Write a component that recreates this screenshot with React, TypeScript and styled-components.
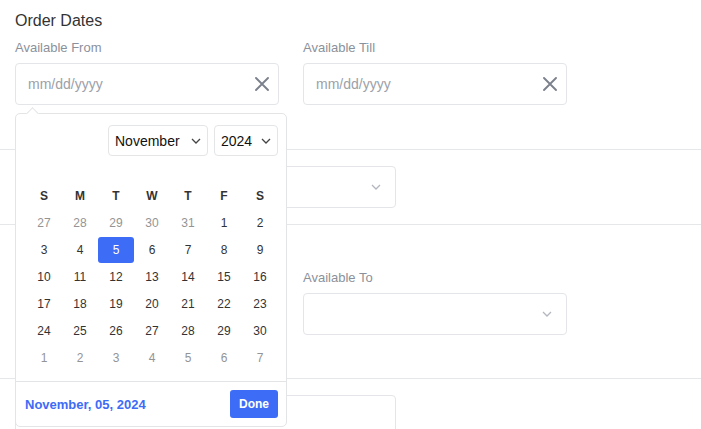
import React from "react";
import styled, { createGlobalStyle } from "styled-components";

const GlobalStyle = createGlobalStyle`
  html, body {
    margin: 0;
    padding: 0;
    background: #ffffff;
  }
  body {
    font-family: "Liberation Sans", Arial, sans-serif;
    color: #333333;
  }
`;

const Page = styled.div`
  width: 100%;
  overflow: hidden;
`;

const Section = styled.section<{ $top: number; $bottom: number; $last?: boolean }>`
  padding: ${(p) => p.$top}px 15px ${(p) => p.$bottom}px;
  border-bottom: ${(p) => (p.$last ? "none" : "1px solid #e6e7e9")};
`;

const Title = styled.h2`
  margin: 0 0 10px;
  font-size: 16px;
  line-height: 19px;
  font-weight: normal;
  color: #333333;
`;

const FieldGrid = styled.div<{ $raised?: boolean }>`
  position: relative;
  z-index: ${(p) => (p.$raised ? 5 : 1)};
  display: grid;
  grid-template-columns: 264px 264px;
  column-gap: 24px;
`;

const Field = styled.div`
  position: relative;
  display: flex;
  flex-direction: column;
`;

const Label = styled.label`
  min-height: 15px;
  margin-bottom: 8px;
  font-size: 13px;
  line-height: 15px;
  color: #8b919b;
`;

const InputBox = styled.div<{ $width?: number }>`
  box-sizing: border-box;
  width: ${(p) => (p.$width ? `${p.$width}px` : "100%")};
  height: 42px;
  display: flex;
  align-items: center;
  justify-content: space-between;
  padding: 0 9px 0 12px;
  border: 1px solid #e3e5e8;
  border-radius: 4px;
  background: #ffffff;
`;

const Placeholder = styled.span`
  font-size: 14px;
  color: #9ba1a9;
`;

const SelectChevron = styled.span`
  display: flex;
  margin-right: 5px;
  color: #b3b7bd;
`;

// calendar popup
const Popup = styled.div`
  position: absolute;
  top: calc(100% + 8px);
  left: 0;
  z-index: 10;
  box-sizing: border-box;
  width: 272px;
  border: 1px solid #e3e4e6;
  border-radius: 5px;
  background: #ffffff;

  &::before {
    content: "";
    position: absolute;
    top: -5px;
    left: 12px;
    width: 8px;
    height: 8px;
    background: #ffffff;
    border-top: 1px solid #e3e4e6;
    border-left: 1px solid #e3e4e6;
    transform: rotate(45deg);
  }
`;

const PopupHead = styled.div`
  display: flex;
  justify-content: flex-end;
  gap: 6px;
  padding: 11px 8px 0;
`;

const MiniSelect = styled.div<{ $width: number }>`
  box-sizing: border-box;
  width: ${(p) => p.$width}px;
  height: 31px;
  display: flex;
  align-items: center;
  justify-content: space-between;
  padding: 0 6px 0 6px;
  border: 1px solid #e4e5e7;
  border-radius: 4px;
  font-size: 14px;
  color: #111111;
`;

const DayGrid = styled.div`
  display: grid;
  grid-template-columns: repeat(7, 36px);
  grid-auto-rows: 26px;
  row-gap: 1px;
  margin-top: 27px;
  padding: 0 8px 10px 10px;
`;

const WeekDay = styled.div`
  display: flex;
  align-items: center;
  justify-content: center;
  font-size: 12px;
  font-weight: bold;
  color: #333333;
`;

const Day = styled.div<{ $muted?: boolean; $selected?: boolean }>`
  display: flex;
  align-items: center;
  justify-content: center;
  font-size: 12px;
  border-radius: 3px;
  color: ${(p) => (p.$selected ? "#ffffff" : p.$muted ? "#949494" : "#333333")};
  background: ${(p) => (p.$selected ? "#3d6cf7" : "transparent")};
`;

const PopupFooter = styled.div`
  display: flex;
  align-items: center;
  justify-content: space-between;
  padding: 8px 8px 8px 9px;
  border-top: 1px solid #e3e4e6;
`;

const FooterDate = styled.span`
  font-size: 13px;
  font-weight: bold;
  color: #3d6cf7;
`;

const DoneButton = styled.button`
  width: 48px;
  height: 28px;
  border: none;
  border-radius: 3px;
  background: #3d6cf7;
  color: #ffffff;
  font-family: inherit;
  font-size: 12px;
  font-weight: bold;
  cursor: pointer;
`;

const ClearIcon = () => (
  <svg width="14" height="14" viewBox="0 0 14 14">
    <path d="M1 1L13 13M13 1L1 13" stroke="#7b818c" strokeWidth="1.9" strokeLinecap="round" />
  </svg>
);

const Chevron = ({ color, width = 10 }: { color: string; width?: number }) => (
  <svg width={width} height="6" viewBox="0 0 10 6">
    <path d="M1 1L5 5L9 1" stroke={color} strokeWidth="1.3" fill="none" />
  </svg>
);

const WEEKDAYS = ["S", "M", "T", "W", "T", "F", "S"];

type Cell = { day: number; muted: boolean };

const cells: Cell[] = [
  ...[27, 28, 29, 30, 31].map((d) => ({ day: d, muted: true })),
  ...Array.from({ length: 30 }, (_, i) => ({ day: i + 1, muted: false })),
  ...Array.from({ length: 7 }, (_, i) => ({ day: i + 1, muted: true })),
];

function DateField({ label, open }: { label: string; open?: boolean }) {
  return (
    <Field>
      <Label>{label}</Label>
      <InputBox>
        <Placeholder>mm/dd/yyyy</Placeholder>
        <ClearIcon />
      </InputBox>
      {open && (
        <Popup>
          <PopupHead>
            <MiniSelect $width={100}>
              November
              <Chevron color="#444" />
            </MiniSelect>
            <MiniSelect $width={64}>
              2024
              <Chevron color="#444" />
            </MiniSelect>
          </PopupHead>
          <DayGrid>
            {WEEKDAYS.map((w, i) => (
              <WeekDay key={i}>{w}</WeekDay>
            ))}
            {cells.map((c, i) => (
              <Day key={i} $muted={c.muted} $selected={!c.muted && c.day === 5}>
                {c.day}
              </Day>
            ))}
          </DayGrid>
          <PopupFooter>
            <FooterDate>November, 05, 2024</FooterDate>
            <DoneButton>Done</DoneButton>
          </PopupFooter>
        </Popup>
      )}
    </Field>
  );
}

function SelectField({ label, width, withLabel }: { label?: string; width?: number; withLabel?: boolean }) {
  return (
    <Field>
      {withLabel && <Label>{label}</Label>}
      <InputBox $width={width}>
        <span />
        <SelectChevron>
          <Chevron color="#b3b7bd" width={10} />
        </SelectChevron>
      </InputBox>
    </Field>
  );
}

export default function App() {
  return (
    <Page>
      <GlobalStyle />
      <Section $top={11} $bottom={44}>
        <Title>Order Dates</Title>
        <FieldGrid $raised>
          <DateField label="Available From" open />
          <DateField label="Available Till" />
        </FieldGrid>
      </Section>
      <Section $top={16} $bottom={16}>
        <SelectField width={381} />
      </Section>
      <Section $top={45} $bottom={43}>
        <FieldGrid>
          <SelectField withLabel />
          <SelectField withLabel label="Available To" />
        </FieldGrid>
      </Section>
      <Section $top={16} $bottom={16} $last>
        <Field>
          <InputBox $width={381} />
        </Field>
      </Section>
    </Page>
  );
}
